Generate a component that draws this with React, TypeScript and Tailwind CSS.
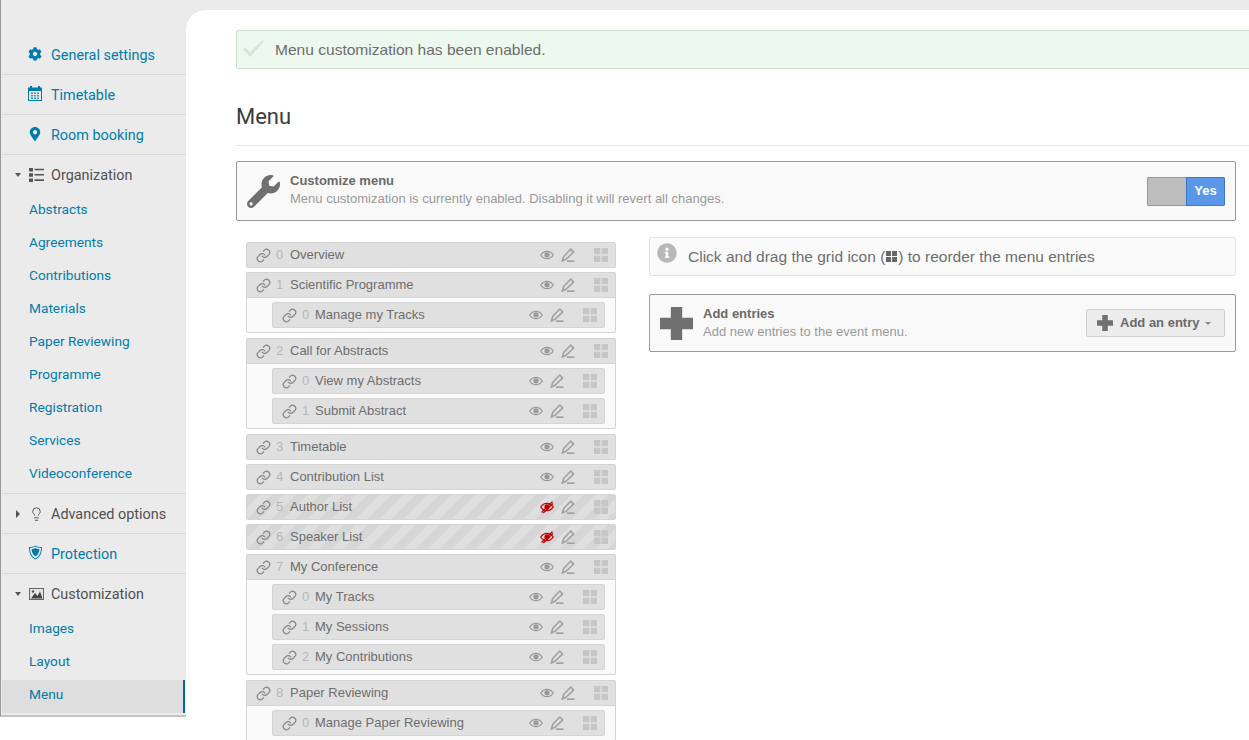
import React from "react";
import { FaCog, FaMapMarkerAlt, FaWrench, FaInfoCircle } from "react-icons/fa";
import { Lightbulb, Link as LinkIcon } from "lucide-react";

const Calendar = () => (
  <svg width="14" height="15" viewBox="0 0 14 15" fill="#007cac">
    <path fillRule="evenodd" d="M0 1.500h2V0h2v1.500h6V0h2v1.500h2V15H0zM1 5v9h12V5z" />
    <path d="M3 6.500h2V8H3zM6 6.500h2V8H6zM9 6.500h2V8H9zM3 9h2v1.500H3zM6 9h2v1.500H6zM9 9h2v1.500H9zM3 11.500h2V13H3zM6 11.500h2V13H6zM9 11.500h2V13H9z" opacity=".8" />
  </svg>
);

const ListIcon = () => (
  <svg width="15" height="14" viewBox="0 0 15 14" fill="#555">
    <path d="M0 0h4v3.500H0zM0 5.200h4v3.500H0zM0 10.400h4V14H0zM5.500 .7H15v1.600H5.500zM5.500 6H15v1.600H5.500zM5.500 11.300H15v1.600H5.500z" />
  </svg>
);

const Shield = () => (
  <svg width="13" height="15" viewBox="0 0 13 14" fill="#007cac">
    <path fillRule="evenodd" d="M6.500 0c1.600 1 3.600 1.500 6.500 1.500 0 5.500-1.500 10-6.500 12.500C1.500 11.500 0 7 0 1.500 2.900 1.500 4.900 1 6.500 0zm0 1.100C5 2 3.300 2.400 1 2.500c.1 4.500 1.400 8.300 5.500 10.400 4.100-2.100 5.400-5.900 5.500-10.400-2.300-.1-4-.5-5.500-1.400z" />
    <path d="M6.500 2.500c1.100.6 2.200.9 3.900 1-.1 3.300-1.100 5.700-3.900 7.300-2.800-1.600-3.800-4-3.900-7.300 1.700-.1 2.800-.4 3.900-1z" />
  </svg>
);

const ImageIcon = () => (
  <svg width="15" height="12" viewBox="0 0 15 12">
    <rect x=".5" y=".5" width="14" height="11" fill="#e4e4e4" stroke="#666" />
    <path d="M2 10.500 6 5l2.500 3L11 3.500l2.500 7z" fill="#444" />
    <circle cx="4" cy="3.500" r="1.200" fill="#555" />
  </svg>
);

const Eye = ({ off }: { off?: boolean }) => {
  const c = off ? "#c00000" : "#999";
  return (
    <svg width="14" height="14" viewBox="0 0 14 14" fill="none" stroke={c}>
      <path d="M.7 7C2.300 4.600 4.500 3.300 7 3.300S11.700 4.600 13.300 7C11.700 9.400 9.500 10.700 7 10.700S2.300 9.400 .7 7z" strokeWidth="1.200" />
      <circle cx="7" cy="6.800" r="2.600" fill={c} stroke="none" />
      {off && <path d="M1.500 12.500 12.500 1.500M3.300 13 13 3.300" strokeWidth="1.200" />}
    </svg>
  );
};

const Pencil = () => (
  <svg width="14" height="14" viewBox="0 0 14 14" fill="none" stroke="#a0a0a0" strokeWidth="1.500">
    <path d="M9.800 1.100 12.700 3.900 5 11.300 1.300 13 2.700 8.500z" />
    <path d="M6 13.200h7.500" strokeWidth="1.700" />
  </svg>
);

const Grid = () => (
  <svg width="14" height="14" viewBox="0 0 14 14" fill="#c6c6c6">
    <path d="M0 0h6.300v6.300H0zM7.700 0H14v6.300H7.700zM0 7.700h6.300V14H0zM7.700 7.700H14V14H7.700z" />
  </svg>
);

const Plus = ({ size }: { size: number }) => (
  <svg width={size} height={size} viewBox="0 0 32 32" fill="#707070">
    <path d="M10.500 0h11v10.500H32v11H21.500V32h-11V21.500H0v-11h10.500z" />
  </svg>
);

const Tick = () => (
  <svg width="21" height="17" viewBox="0 0 21 17" fill="#d5e5d7">
    <path d="M0 9.500 2 7.500 7 12 19.500 0 21 1 7.500 17z" />
  </svg>
);

const Caret = ({ open }: { open: boolean }) =>
  open ? (
    <span className="mr-[8px] w-0 h-0 border-x-[3px] border-x-transparent border-t-[4px] border-t-[#555]" />
  ) : (
    <span className="ml-[1px] mr-[9px] w-0 h-0 border-y-[4px] border-y-transparent border-l-[4px] border-l-[#555]" />
  );

const TopLink = ({ icon, label }: { icon: React.ReactNode; label: string }) => (
  <div className="flex items-center h-[40px] pl-[26px] text-[#007cac] border-b border-[#d9d9d9]">
    <span className="w-[14px] flex justify-center mr-[9px] -mt-[2px]">{icon}</span>
    <span className="text-[14.400px] pt-[2px]">{label}</span>
  </div>
);

const Group = ({ icon, label, open }: { icon: React.ReactNode; label: string; open: boolean }) => (
  <div className="flex items-center h-[39px] pl-[13px] text-[#505050]">
    <Caret open={open} />
    <span className="w-[15px] flex justify-center mr-[7px]">{icon}</span>
    <span className="text-[14.400px] pt-[2px]">{label}</span>
  </div>
);

const SubLink = ({ label, active, high }: { label: string; active?: boolean; high?: boolean }) => (
  <div className={`flex items-center h-[33px] pl-[27px] text-[13.700px] text-[#007cac] ${high ? "pb-[5px]" : "pb-[3px]"} ${active ? "bg-[#dedede] border-r-2 border-[#0b63a5] mr-[1px]" : ""}`}>
    {label}
  </div>
);

const Sidebar = () => (
  <aside className="w-[186px] shrink-0 h-[717px] bg-[#ebebeb] border-l border-[#999] pl-[1px] border-b-2 border-b-[#c4c4c4] pt-[35px] font-['Roboto',sans-serif]">
    <TopLink icon={<FaCog size={14} />} label="General settings" />
    <TopLink icon={<Calendar />} label="Timetable" />
    <TopLink icon={<FaMapMarkerAlt size={14} />} label="Room booking" />
    <div className="border-b border-[#d9d9d9] pb-[2px]">
      <Group icon={<ListIcon />} label="Organization" open />
      {["Abstracts", "Agreements", "Contributions", "Materials", "Paper Reviewing", "Programme", "Registration", "Services", "Videoconference"].map((s) => (
        <SubLink key={s} label={s} />
      ))}
    </div>
    <div className="border-b border-[#d9d9d9]">
      <Group icon={<Lightbulb size={16} strokeWidth={1.500} />} label="Advanced options" open={false} />
    </div>
    <TopLink icon={<Shield />} label="Protection" />
    <Group icon={<ImageIcon />} label="Customization" open />
    <div className="pt-[1px]">
      <SubLink label="Images" high />
      <SubLink label="Layout" high />
      <SubLink label="Menu" active high />
    </div>
  </aside>
);

const Row = ({ n, label, hidden, child }: { n: number; label: string; hidden?: boolean; child?: boolean }) => (
  <div
    className={`flex items-center h-[26px] border border-[#d4d4d4] rounded-[2px] text-[13px] text-[#6e6e6e] ${hidden ? "bg-[repeating-linear-gradient(135deg,#d6d6d6_0,#d6d6d6_8.500px,#dfdfdf_8.500px,#dfdfdf_17px)]" : "bg-[#e0e0e0]"}`}
  >
    <LinkIcon size={15} className="ml-[9px] text-[#858585]" strokeWidth={1.900} />
    <span className={`ml-[5px] text-[#b6b6b6] ${child ? "w-[13px]" : "w-[14px]"}`}>{n}</span>
    <span>{label}</span>
    <span className="ml-auto flex items-center">
      <Eye off={hidden} />
      <span className="ml-[7px]"><Pencil /></span>
      <span className="ml-[19px] mr-[7px]"><Grid /></span>
    </span>
  </div>
);

type Entry = { label: string; hidden?: boolean; kids?: string[] };
const entries: Entry[] = [
  { label: "Overview" },
  { label: "Scientific Programme", kids: ["Manage my Tracks"] },
  { label: "Call for Abstracts", kids: ["View my Abstracts", "Submit Abstract"] },
  { label: "Timetable" },
  { label: "Contribution List" },
  { label: "Author List", hidden: true },
  { label: "Speaker List", hidden: true },
  { label: "My Conference", kids: ["My Tracks", "My Sessions", "My Contributions"] },
  { label: "Paper Reviewing", kids: ["Manage Paper Reviewing"] },
];

const MenuList = () => (
  <div className="w-[370px] ml-[10px] flex flex-col gap-[4px] shrink-0">
    {entries.map((e, i) =>
      e.kids ? (
        <div key={e.label} className="border border-[#d4d4d4] rounded-[2px] bg-[#fafafa] mb-[1px] last:mb-0">
          <div className="-m-px">
            <Row n={i} label={e.label} hidden={e.hidden} />
          </div>
          <div className="pt-[5px] pb-[4px] pl-[25px] pr-[10px] flex flex-col gap-[4px]">
            {e.kids.map((k, j) => (
              <Row key={k} n={j} label={k} child />
            ))}
          </div>
        </div>
      ) : (
        <Row key={e.label} n={i} label={e.label} hidden={e.hidden} />
      )
    )}
  </div>
);

export default function App() {
  return (
    <div className="h-[740px] w-[1249px] overflow-hidden bg-white flex font-['Liberation_Sans',sans-serif]">
      <Sidebar />
      <main className="flex-1 min-w-0 bg-[#ebebeb] h-[740px]">
        <div className="mt-[10px] h-[730px] bg-white rounded-tl-[20px] pl-[50px] pt-[20px] overflow-hidden">
          <div className="w-[1040px] h-[39px] flex items-center bg-[#edf8ee] border border-[#cde0cf] rounded-[2px] text-[#6e6e6e]">
            <span className="ml-[6px] -mt-[3px]"><Tick /></span>
            <span className="ml-[11px] text-[15.550px]">Menu customization has been enabled.</span>
          </div>
          <div className="w-[1040px] h-[77px] border-b border-[#e6e6e6] flex items-center font-['Roboto',sans-serif] text-[22px] text-[#3c3c3c] pt-[18px]">
            Menu
          </div>
          <div className="w-[1000px] h-[60px] mt-[15px] flex items-center bg-[#f9f9f9] border border-[#999] rounded-[2px]">
            <FaWrench size={33} className="ml-[10px] text-[#707070]" />
            <div className="ml-[10px] -mt-[2px] text-[13px] leading-[18px]">
              <div className="font-bold text-[#6a6a6a]">Customize menu</div>
              <div className="text-[#999]">Menu customization is currently enabled. Disabling it will revert all changes.</div>
            </div>
            <div className="ml-auto mr-[10px] flex h-[29px] w-[78px] rounded-[2px] overflow-hidden">
              <div className="w-[39px] bg-[#bdbdbd] border border-[#999] border-r-0" />
              <div className="w-[39px] bg-[#5b97e8] border border-[#3a78c8] text-white font-bold text-[13px] flex items-center justify-center">Yes</div>
            </div>
          </div>
          <div className="flex mt-[21px]">
            <MenuList />
            <div className="ml-[33px] -mt-[5px] w-[587px] flex flex-col gap-[18px] self-start">
              <div className="h-[39px] flex items-center bg-[#fafafa] border border-[#e3e3e3] rounded-[2px] text-[#6e6e6e] text-[15.500px]">
                <FaInfoCircle size={20} className="ml-[7px] -mt-[7px] text-[#b8b8b8]" />
                <span className="ml-[11px] flex items-center">
                  Click and drag the grid icon (
                  <svg width="11" height="11" viewBox="0 0 14 14" fill="#666" className="mx-[1px]">
                    <path d="M0 0h6.300v6.300H0zM7.700 0H14v6.300H7.700zM0 7.700h6.300V14H0zM7.700 7.700H14V14H7.700z" />
                  </svg>
                  ) to reorder the menu entries
                </span>
              </div>
              <div className="h-[58px] flex items-center bg-[#f9f9f9] border border-[#999] rounded-[2px]">
                <span className="ml-[10px]"><Plus size={33} /></span>
                <div className="ml-[10px] text-[13px] leading-[18px]">
                  <div className="font-bold text-[#6a6a6a]">Add entries</div>
                  <div className="text-[#999]">Add new entries to the event menu.</div>
                </div>
                <div className="ml-auto mr-[10px] h-[28px] w-[139px] flex items-center bg-[#ececec] border border-[#cfcfcf] rounded-[2px] text-[13px] font-bold text-[#6a6a6a]">
                  <span className="ml-[10px]"><Plus size={16} /></span>
                  <span className="ml-[7px]">Add an entry</span>
                  <span className="ml-[6px] w-0 h-0 border-x-[3px] border-x-transparent border-t-[3px] border-t-[#888]" />
                </div>
              </div>
            </div>
          </div>
        </div>
      </main>
    </div>
  );
}
